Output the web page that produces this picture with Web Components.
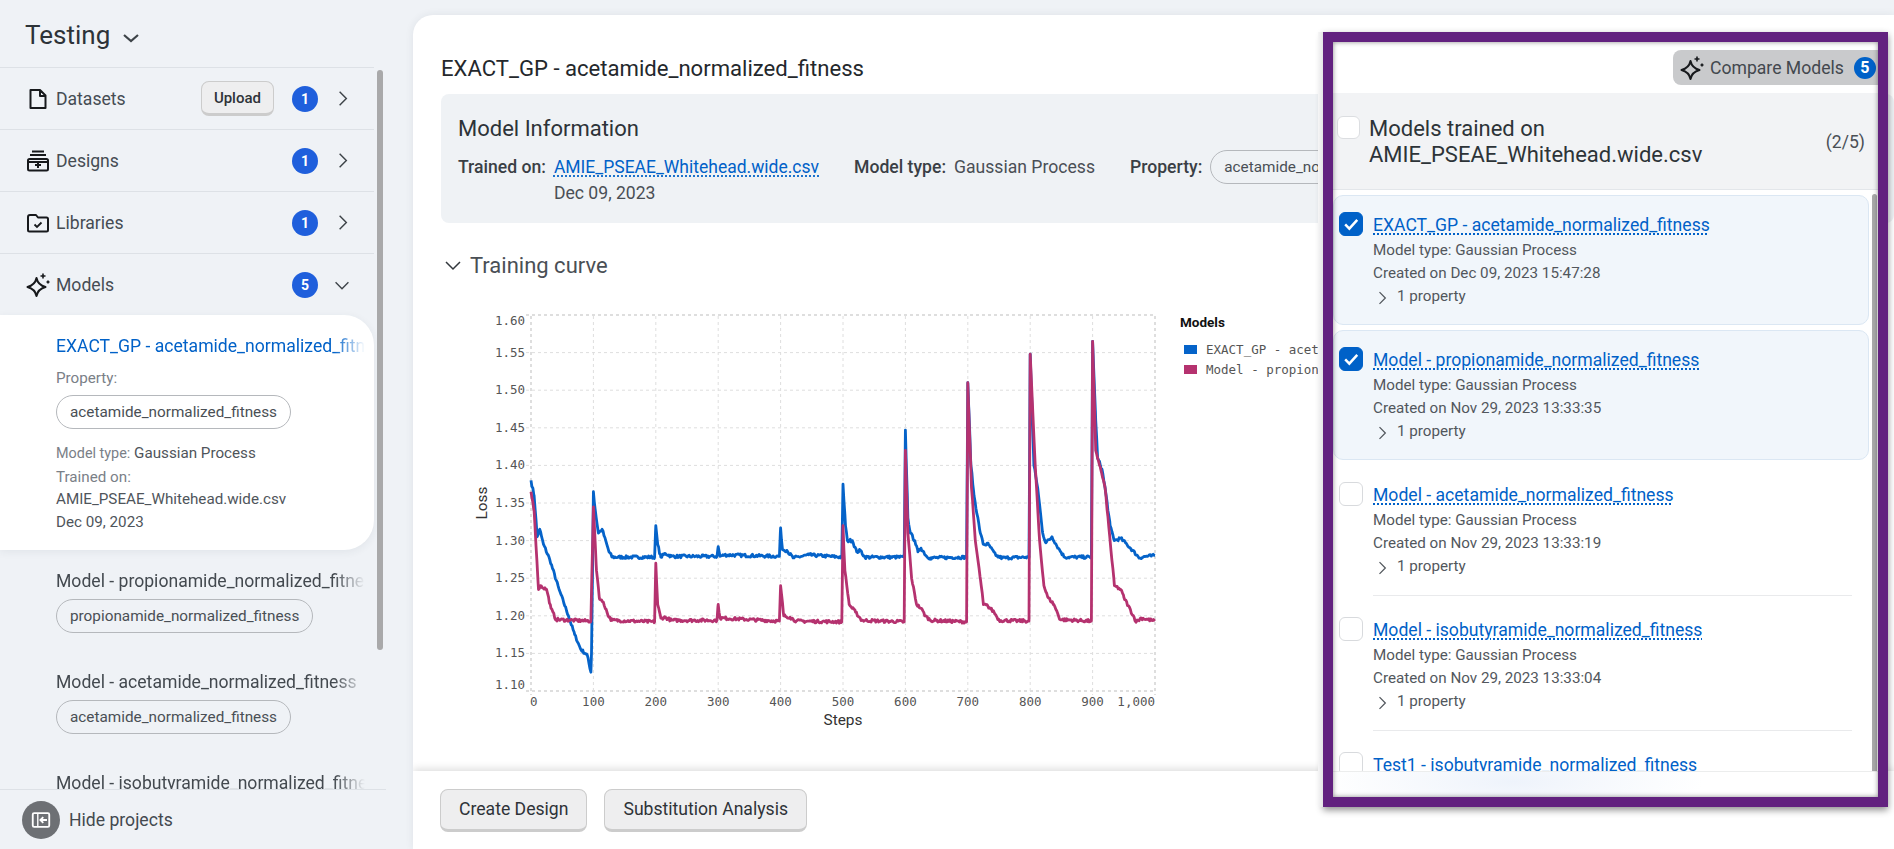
<!doctype html>
<html lang="en">
<head>
<meta charset="utf-8">
<title>Testing</title>
<style>
  html, body { margin: 0; height: 100%; overflow: hidden; background: #eff2f6; }
  body { font-family: Roboto, "Liberation Sans", sans-serif; }
</style>
</head>
<body>
<app-shell>
  <project-sidebar slot="side" title-text="Testing">
    <nav-row label="Datasets" icon="file" count="1" upload></nav-row>
    <nav-row label="Designs" icon="designs" count="1"></nav-row>
    <nav-row label="Libraries" icon="folder" count="1"></nav-row>
    <nav-row label="Models" icon="sparkle" count="5" open></nav-row>
    <model-card active name="EXACT_GP - acetamide_normalized_fitness" prop="acetamide_normalized_fitness"></model-card>
    <model-card name="Model - propionamide_normalized_fitness" prop="propionamide_normalized_fitness"></model-card>
    <model-card name="Model - acetamide_normalized_fitness" prop="acetamide_normalized_fitness"></model-card>
    <model-card name="Model - isobutyramide_normalized_fitness" prop="isobutyramide_normalized_fitness"></model-card>
  </project-sidebar>
  <model-view slot="main"></model-view>
</app-shell>

<script>
const ICONS = {
  file: '<path d="M4.500 3h9.500l5.500 5.500V21h-15z M14 3v6h5.500" fill="none" stroke="currentColor" stroke-width="2" stroke-linejoin="round"/>',
  designs: '<path d="M6 2.500h12 M4 6h16" stroke="currentColor" stroke-width="2" fill="none"/><rect x="2" y="10" width="20" height="11.500" rx="1.500" fill="none" stroke="currentColor" stroke-width="2"/><path d="M2 13h20 M12 13v6 M9 16h6" stroke="currentColor" stroke-width="2" fill="none"/>',
  folder: '<path d="M2 6a2 2 0 0 1 2-2h6l2 2.500h8.500a1.500 1.500 0 0 1 1.500 1.500v11a1.500 1.500 0 0 1-1.500 1.500H3.500A1.500 1.500 0 0 1 2 19z" fill="none" stroke="currentColor" stroke-width="2" stroke-linejoin="round"/><path d="M8.500 13.500l2.500 2.500 4.500-4.500" fill="none" stroke="currentColor" stroke-width="1.800"/>',
  sparkle: '<path d="M10.500 5c1 5 3.500 7.500 9 9-5.500 1.500-8 4-9 9-1-5-3.500-7.500-9-9 5.500-1.500 8-4 9-9z" fill="none" stroke="currentColor" stroke-width="2" stroke-linejoin="round"/><path d="M17 .5v5 M14.500 3h5 M22 7.500v3 M20.500 9h3" stroke="currentColor" stroke-width="1.600" fill="none"/>',
  right: '<path d="M9 5l7 7-7 7" fill="none" stroke="currentColor" stroke-width="1.500"/>',
  down: '<path d="M5 9l7 7 7-7" fill="none" stroke="currentColor" stroke-width="1.500"/>',
  downb: '<path d="M5 10l7 6 7-6" fill="none" stroke="currentColor" stroke-width="2.200"/>',
  hide: '<rect x="3" y="4.500" width="18" height="15" rx="1.500" fill="none" stroke="currentColor" stroke-width="2"/><path d="M8.500 5v14" stroke="currentColor" stroke-width="1.500"/><path d="M18.500 12h-7 M14.500 8.800L11.300 12l3.200 3.200" fill="none" stroke="currentColor" stroke-width="2"/>',
  check: '<path d="M5 12.500l5 5L19.500 7" fill="none" stroke="currentColor" stroke-width="3"/>'
}

class iconGlyph extends HTMLElement {
  connectedCallback(){
    const size = this.getAttribute('size') || 24
    this.attachShadow({mode: 'open'}).innerHTML = `
      <style>
        :host{ display: inline-flex; width: ${size}px; height: ${size}px; flex: none; }
        svg{ width: 100%; height: 100%; display: block; overflow: visible; }
      </style>
      <svg viewBox="0 0 24 24">${ICONS[this.getAttribute('name')]}</svg>
    `
  }
}
customElements.define('icon-glyph', iconGlyph)

class countBadge extends HTMLElement {
  connectedCallback(){
    const size = this.getAttribute('size') || 26
    this.attachShadow({mode: 'open'}).innerHTML = `
      <style>
        :host{
          display: inline-flex;
          flex: none;
          width: ${size}px;
          height: ${size}px;
          border-radius: 50%;
          align-items: center;
          justify-content: center;
          background: var(--badge-bg, #1f5fdc);
          color: #fff;
          font: 700 var(--badge-size, 14px) Roboto, sans-serif;
        }
      </style>
      <slot></slot>
    `
  }
}
customElements.define('count-badge', countBadge)

class tagChip extends HTMLElement {
  connectedCallback(){
    this.attachShadow({mode: 'open'}).innerHTML = `
      <style>
        :host{
          display: inline-flex;
          align-items: center;
          height: 34px;
          box-sizing: border-box;
          padding: 0 13px;
          border: 1px solid #b5b8bc;
          border-radius: 17px;
          font: 400 15.300px Roboto, sans-serif;
          color: #4a4f55;
          white-space: nowrap;
        }
      </style>
      <slot></slot>
    `
  }
}
customElements.define('tag-chip', tagChip)

class uiButton extends HTMLElement {
  connectedCallback(){
    this.attachShadow({mode: 'open'}).innerHTML = `
      <style>
        :host{
          display: inline-flex;
          align-items: center;
          justify-content: center;
          box-sizing: border-box;
          height: var(--btn-h, 43px);
          padding: 0 var(--btn-pad, 18px);
          background: #eeeeef;
          border: 1px solid #cccccc;
          border-bottom-width: 3px;
          border-radius: 8px;
          color: #2e3338;
          font: var(--btn-font, 400 17.600px Roboto, sans-serif);
          white-space: nowrap;
        }
      </style>
      <slot></slot>
    `
  }
}
customElements.define('ui-button', uiButton)

class navRow extends HTMLElement {
  connectedCallback(){
    const open = this.hasAttribute('open')
    const upload = this.hasAttribute('upload')
    this.attachShadow({mode: 'open'}).innerHTML = `
      <style>
        :host{
          display: flex;
          align-items: center;
          height: 62px;
          box-sizing: border-box;
          width: 374px;
          border-top: 1px solid #dde1e6;
          padding-left: 26px;
          color: #454c53;
          font: 400 17.600px Roboto, sans-serif;
        }
        .ico{ color: #17191c; width: 30px; display: flex; }
        .lbl{ flex: 1; }
        ui-button{ --btn-h: 35px; --btn-pad: 12px; --btn-font: 500 15px Roboto, sans-serif; margin-right: 18px; }
        .chev{ width: 24px; margin: 0 20px 0 12px; color: #3d4348; display: flex; justify-content: center; }
      </style>
      <span class="ico"><icon-glyph name="${this.getAttribute('icon')}" size="24"></icon-glyph></span>
      <span class="lbl">${this.getAttribute('label')}</span>
      ${upload ? '<ui-button>Upload</ui-button>' : ''}
      <count-badge>${this.getAttribute('count')}</count-badge>
      <span class="chev"><icon-glyph name="${open ? 'down' : 'right'}" size="${open ? 22 : 23}"></icon-glyph></span>
    `
  }
}
customElements.define('nav-row', navRow)

class modelCard extends HTMLElement {
  connectedCallback(){
    const active = this.hasAttribute('active')
    const details = active ? `
      <div class="prop-label">Property:</div>
      <tag-chip>${this.getAttribute('prop')}</tag-chip>
      <div class="meta">
        <div><span class="dim small">Model type:</span> Gaussian Process</div>
        <div class="dim">Trained on:</div>
        <div>AMIE_PSEAE_Whitehead.wide.csv</div>
        <div>Dec 09, 2023</div>
      </div>
    ` : `<tag-chip>${this.getAttribute('prop')}</tag-chip>`
    this.attachShadow({mode: 'open'}).innerHTML = `
      <style>
        :host{
          display: block;
          width: 374px;
          box-sizing: border-box;
          padding: 19px 0 0 56px;
          height: ${active ? '235px' : '101px'};
          font: 400 15.200px Roboto, sans-serif;
          color: #4f555b;
        }
        :host([active]){
          background: #fff;
          border-radius: 0 30px 30px 0;
          box-shadow: 0 2px 8px rgba(40, 50, 70, .07);
        }
        .name{
          width: 309px;
          overflow: hidden;
          white-space: nowrap;
          font-size: 17.600px;
          line-height: 24px;
          color: #43494f;
          -webkit-mask-image: linear-gradient(to right, #000 90%, transparent 100%);
          mask-image: linear-gradient(to right, #000 90%, transparent 100%);
        }
        :host([active]) .name{ color: #0061c8; }
        .prop-label{ color: #7a8087; margin-top: 9px; line-height: 22px; }
        tag-chip{ margin-top: 6px; }
        .meta{ margin-top: 13px; line-height: 22.600px; }
        .dim{ color: #7a8087; }
        .small{ font-size: 14.400px; }
      </style>
      <div class="name">${this.getAttribute('name')}</div>
      ${details}
    `
  }
}
customElements.define('model-card', modelCard)

class projectSidebar extends HTMLElement {
  connectedCallback(){
    this.attachShadow({mode: 'open'}).innerHTML = `
      <style>
        :host{
          display: flex;
          flex-direction: column;
          height: 849px;
          position: relative;
          font-family: Roboto, sans-serif;
        }
        .head{
          height: 67px;
          flex: none;
          box-sizing: border-box;
          padding: 19px 0 0 25px;
          display: flex;
          align-items: flex-start;
          gap: 9px;
          font-size: 26px;
          line-height: 32px;
          color: #2d3338;
        }
        .head icon-glyph{ margin-top: 6px; color: #3d4348; }
        .scroll{ flex: 1; overflow: hidden; min-height: 0; }
        .foot{
          height: 60px;
          flex: none;
          width: 386px;
          box-sizing: border-box;
          border-top: 1px solid #dde1e6;
          display: flex;
          align-items: center;
          gap: 9px;
          padding-left: 22px;
          font-size: 17.600px;
          color: #43494f;
        }
        .round{
          width: 38px;
          height: 38px;
          border-radius: 50%;
          background: #6d7074;
          color: #fff;
          display: flex;
          align-items: center;
          justify-content: center;
        }
        .bar{
          position: absolute;
          left: 377px;
          top: 70px;
          width: 6px;
          height: 580px;
          border-radius: 3px;
          background: #a9a9aa;
        }
      </style>
      <div class="head">
        <span>${this.getAttribute('title-text')}</span>
        <icon-glyph name="downb" size="24"></icon-glyph>
      </div>
      <div class="scroll"><slot></slot></div>
      <div class="foot">
        <span class="round"><icon-glyph name="hide" size="22"></icon-glyph></span>
        <span>Hide projects</span>
      </div>
      <div class="bar"></div>
    `
  }
}
customElements.define('project-sidebar', projectSidebar)

const BLUE = [[0,1.38],[5,1.36],[10,1.305],[14,1.315],[20,1.295],[30,1.275],[45,1.235],[60,1.2],[70,1.175],[80,1.155],[90,1.148],[96,1.125],[97,1.15],[100,1.365],[103,1.34],[108,1.31],[114,1.315],[125,1.285],[130,1.278],[198,1.278],[200,1.32],[203,1.295],[208,1.278],[215,1.283],[225,1.279],[298,1.279],[300,1.292],[303,1.279],[310,1.281],[398,1.279],[400,1.317],[403,1.288],[410,1.287],[420,1.277],[445,1.281],[498,1.278],[500,1.375],[504,1.32],[507,1.3],[515,1.3],[522,1.285],[528,1.287],[535,1.278],[598,1.278],[600,1.447],[604,1.33],[608,1.31],[615,1.3],[620,1.285],[625,1.29],[635,1.278],[640,1.277],[698,1.278],[700,1.51],[705,1.4],[710,1.36],[720,1.31],[725,1.295],[733,1.295],[745,1.28],[755,1.277],[798,1.278],[800,1.548],[806,1.4],[812,1.37],[820,1.31],[825,1.297],[835,1.305],[845,1.29],[855,1.278],[898,1.278],[900,1.565],[905,1.46],[908,1.41],[915,1.395],[920,1.37],[928,1.32],[935,1.3],[945,1.303],[955,1.295],[975,1.277],[985,1.279],[1000,1.28]]
const PINK = [[0,1.365],[5,1.34],[12,1.235],[15,1.24],[25,1.235],[32,1.21],[40,1.195],[96,1.193],[100,1.345],[105,1.26],[110,1.222],[116,1.218],[125,1.198],[130,1.194],[198,1.192],[200,1.27],[203,1.215],[208,1.197],[215,1.198],[225,1.194],[298,1.194],[300,1.215],[303,1.197],[398,1.193],[400,1.24],[405,1.2],[415,1.198],[425,1.193],[498,1.192],[500,1.32],[503,1.26],[510,1.215],[520,1.205],[530,1.194],[598,1.192],[600,1.42],[604,1.31],[610,1.25],[618,1.215],[625,1.21],[632,1.2],[640,1.194],[698,1.192],[700,1.51],[706,1.37],[712,1.3],[720,1.25],[725,1.215],[732,1.213],[742,1.205],[750,1.194],[798,1.193],[800,1.548],[808,1.4],[815,1.3],[822,1.24],[828,1.225],[838,1.215],[848,1.195],[898,1.193],[900,1.565],[905,1.42],[913,1.395],[920,1.37],[928,1.3],[935,1.24],[945,1.235],[950,1.225],[970,1.192],[978,1.197],[1000,1.193]]

class trainingChart extends HTMLElement {
  connectedCallback(){
    const sx = s => 531 + s * 0.624
    const sy = v => 691 - (v - 1.1) * 752

    let seed = 7
    const rnd = () => {
      seed = (seed * 16807) % 2147483647
      return seed / 2147483647 - 0.5
    }
    const line = pts => {
      let d = ''
      for (let i = 0; i < pts.length - 1; i++) {
        const [a, av] = pts[i]
        const [b, bv] = pts[i + 1]
        for (let s = a; s < b; s += 1.5) {
          const v = av + (bv - av) * (s - a) / (b - a)
          const jitter = s === a ? 0 : rnd() * 0.004
          d += (d ? 'L' : 'M') + sx(s).toFixed(1) + ' ' + sy(v + jitter).toFixed(1)
        }
      }
      return d + 'L' + sx(1000) + ' ' + sy(pts[pts.length - 1][1]).toFixed(1)
    }

    let grid = ''
    let labels = ''
    for (let i = 0; i <= 10; i++) {
      const v = 1.1 + i * 0.05
      const y = sy(v)
      const edge = i === 0 || i === 10
      grid += `<line x1="526" x2="1155" y1="${y}" y2="${y}" stroke="${edge ? '#bdbdbd' : '#dedede'}" stroke-dasharray="3 3"/>`
      const ly = i === 0 ? y - 2 : i === 10 ? y + 10 : y + 4
      labels += `<text x="525" y="${ly}" text-anchor="end">${v.toFixed(2)}</text>`
    }
    for (let i = 0; i <= 10; i++) {
      const x = sx(i * 100)
      const edge = i === 0 || i === 10
      grid += `<line x1="${x}" x2="${x}" y1="316" y2="695" stroke="${edge ? '#bdbdbd' : '#dedede'}" stroke-dasharray="3 3"/>`
      const t = i === 10 ? '1,000' : String(i * 100)
      const a = i === 0 ? 'start' : i === 10 ? 'end' : 'middle'
      labels += `<text x="${i === 0 ? x - 1 : x}" y="706" text-anchor="${a}">${t}</text>`
    }

    this.attachShadow({mode: 'open'}).innerHTML = `
      <style>
        :host{ display: block; width: 1000px; height: 440px; }
        svg{ display: block; }
        .mono text{ font: 12.500px "DejaVu Sans Mono", "Liberation Mono", monospace; fill: #555; }
        .title{ font: 400 15.400px Roboto, sans-serif; fill: #333; }
        .legend-title{ font: 700 13.500px Roboto, sans-serif; fill: #111; }
      </style>
      <svg width="1000" height="440" viewBox="441 300 1000 440">
        ${grid}
        <g class="mono">${labels}</g>
        <path d="${line(BLUE)}" fill="none" stroke="#0563c9" stroke-width="2.800" stroke-linejoin="round"/>
        <path d="${line(PINK)}" fill="none" stroke="#b5326f" stroke-width="2.800" stroke-linejoin="round"/>
        <text class="title" x="843" y="725" text-anchor="middle">Steps</text>
        <text class="title" transform="translate(487 503) rotate(-90)" text-anchor="middle">Loss</text>
        <text class="legend-title" x="1180" y="327">Models</text>
        <rect x="1184" y="345" width="13" height="9" fill="#0563c9"/>
        <rect x="1184" y="365" width="13" height="9" fill="#b5326f"/>
        <g class="mono">
          <text x="1206" y="354">EXACT_GP - acetamide_normalized_fitness</text>
          <text x="1206" y="374">Model - propionamide_normalized_fitness</text>
        </g>
      </svg>
    `
  }
}
customElements.define('training-chart', trainingChart)

class infoCard extends HTMLElement {
  connectedCallback(){
    this.attachShadow({mode: 'open'}).innerHTML = `
      <style>
        :host{
          display: block;
          height: 129px;
          box-sizing: border-box;
          padding: 21px 17px 0;
          background: #eff2f5;
          border-radius: 8px;
          color: #4a4f55;
          font: 400 17.600px Roboto, sans-serif;
        }
        h3{ margin: 0 0 11px; font: 400 22px/28px Roboto, sans-serif; color: #2d3338; }
        .fields{ display: flex; gap: 35px; align-items: flex-start; white-space: nowrap; }
        .field{ display: flex; gap: 8px; line-height: 26px; }
        b{ font-weight: 500; color: #3a3f45; }
        a{
          font-size: 17.500px;
          color: #0061c8;
          text-decoration: underline dotted #0061c8;
          text-underline-offset: 3px;
        }
        tag-chip{ margin-top: -4px; }
      </style>
      <h3>Model Information</h3>
      <div class="fields">
        <div class="field">
          <b>Trained on:</b>
          <div><a>AMIE_PSEAE_Whitehead.wide.csv</a><br>Dec 09, 2023</div>
        </div>
        <div class="field"><b>Model type:</b><span>Gaussian Process</span></div>
        <div class="field"><b>Property:</b><tag-chip>acetamide_normalized_fitness</tag-chip></div>
      </div>
    `
  }
}
customElements.define('info-card', infoCard)

class compareItem extends HTMLElement {
  connectedCallback(){
    const on = this.hasAttribute('checked')
    this.attachShadow({mode: 'open'}).innerHTML = `
      <style>
        :host{
          display: flex;
          box-sizing: border-box;
          height: 130px;
          flex: none;
          width: 536px;
          padding: 16px 16px 0 5px;
          border-radius: 10px;
          border: 1px solid transparent;
          font: 400 15.200px Roboto, sans-serif;
          color: #52575d;
        }
        :host([checked]){ background: #f1f6fb; border-color: #dbe7f3; }
        .box{
          width: 24px;
          height: 24px;
          box-sizing: border-box;
          flex: none;
          border-radius: 6px;
          border: 1px solid #d8dadd;
          background: #fff;
          margin-right: 10px;
          display: flex;
          align-items: center;
          justify-content: center;
          color: #fff;
        }
        .box.on{ background: #0061c8; border-color: #0061c8; }
        .col{ flex: 1; height: 114px; box-sizing: border-box; }
        :host([divider]) .col{ border-bottom: 1px solid #e9eaec; }
        .title{
          display: block;
          font-size: 17.600px;
          line-height: 26px;
          margin-bottom: 1px;
          color: #0061c8;
          text-decoration: underline dotted #0061c8;
          text-underline-offset: 3px;
          white-space: nowrap;
        }
        .line{ line-height: 23px; }
        .prop{ display: flex; align-items: center; gap: 5px; margin-left: -1px; }
        .prop icon-glyph{ margin-top: 3px; }
      </style>
      <div class="box ${on ? 'on' : ''}">${on ? '<icon-glyph name="check" size="20"></icon-glyph>' : ''}</div>
      <div class="col">
        <a class="title">${this.getAttribute('name')}</a>
        <div class="line">Model type: Gaussian Process</div>
        <div class="line">Created on ${this.getAttribute('created')}</div>
        <div class="line prop"><icon-glyph name="right" size="20"></icon-glyph>1 property</div>
      </div>
    `
  }
}
customElements.define('compare-item', compareItem)

class comparePanel extends HTMLElement {
  connectedCallback(){
    this.attachShadow({mode: 'open'}).innerHTML = `
      <style>
        :host{
          position: absolute;
          left: 1323px;
          top: 32px;
          width: 565px;
          height: 775px;
          box-sizing: border-box;
          border: 10px solid #62217f;
          box-shadow: 0 3px 7px rgba(0, 0, 0, .45);
          background: #fff;
          display: flex;
          flex-direction: column;
          font-family: Roboto, sans-serif;
          z-index: 5;
        }
        :host::before{
          content: "";
          position: absolute;
          left: -15px;
          top: -10px;
          bottom: -10px;
          width: 5px;
          background: linear-gradient(to right, #f6f6f7, #e4e4e5);
        }
        :host::after{
          content: "";
          position: absolute;
          inset: 0;
          box-shadow: inset 0 0 5px rgba(0, 0, 0, .45);
          pointer-events: none;
        }
        .top{
          height: 51px;
          flex: none;
          display: flex;
          justify-content: flex-end;
          padding-top: 8px;
          box-sizing: border-box;
        }
        .compare{
          height: 35px;
          width: 205px;
          box-sizing: border-box;
          background: #c9cacc;
          border-radius: 8px 0 0 8px;
          display: flex;
          align-items: center;
          padding-left: 7px;
          gap: 6px;
          color: #43484e;
          font-size: 17.600px;
          white-space: nowrap;
        }
        .compare icon-glyph{ color: #17191c; }
        .compare count-badge{ --badge-bg: #0061c8; --badge-size: 16px; margin-left: 4px; }
        .head{
          height: 97px;
          flex: none;
          box-sizing: border-box;
          background: #f2f3f5;
          border-bottom: 1px solid #e3e6ea;
          display: flex;
          padding: 23px 13px 0 4px;
          font-size: 22px;
          line-height: 26px;
          color: #2d3338;
        }
        .head .box{
          width: 23px;
          height: 23px;
          box-sizing: border-box;
          border: 1px solid #dcdee1;
          border-radius: 6px;
          background: #fff;
          flex: none;
          margin-right: 9px;
        }
        .head .name{ flex: 1; }
        .head .count{ font-size: 17.600px; color: #4a4f55; margin-top: 13px; }
        .list{
          flex: 1;
          min-height: 0;
          overflow: hidden;
          position: relative;
          display: flex;
          flex-direction: column;
          gap: 5px;
          padding-top: 5px;
        }
        .bar{
          position: absolute;
          left: 539px;
          top: 4px;
          bottom: 0;
          width: 5px;
          background: #a9a9aa;
          border-radius: 3px 3px 0 0;
        }
        .foot{
          height: 26px;
          flex: none;
          background: radial-gradient(ellipse 190px 40px at 180px 10px, #eef3fb, #fff);
          border-top: 1px solid #eceded;
          box-sizing: border-box;
        }
      </style>
      <div class="top">
        <div class="compare">
          <icon-glyph name="sparkle" size="24"></icon-glyph>
          <span>Compare Models</span>
          <count-badge size="22">5</count-badge>
        </div>
      </div>
      <div class="head">
        <div class="box"></div>
        <div class="name">Models trained on<br>AMIE_PSEAE_Whitehead.wide.csv</div>
        <div class="count">(2/5)</div>
      </div>
      <div class="list">
        <compare-item checked name="EXACT_GP - acetamide_normalized_fitness" created="Dec 09, 2023 15:47:28"></compare-item>
        <compare-item checked name="Model - propionamide_normalized_fitness" created="Nov 29, 2023 13:33:35"></compare-item>
        <compare-item divider name="Model - acetamide_normalized_fitness" created="Nov 29, 2023 13:33:19"></compare-item>
        <compare-item divider name="Model - isobutyramide_normalized_fitness" created="Nov 29, 2023 13:33:04"></compare-item>
        <compare-item name="Test1 - isobutyramide_normalized_fitness" created="Nov 29, 2023 13:32:50"></compare-item>
        <div class="bar"></div>
      </div>
      <div class="foot"></div>
    `
  }
}
customElements.define('compare-panel', comparePanel)

class modelView extends HTMLElement {
  connectedCallback(){
    this.attachShadow({mode: 'open'}).innerHTML = `
      <style>
        :host{
          display: flex;
          flex-direction: column;
          height: 834px;
          margin-top: 15px;
          background: #fff;
          border-radius: 20px 0 0 0;
          box-shadow: 0 0 8px rgba(40, 50, 70, .08);
          font-family: Roboto, sans-serif;
          overflow: hidden;
        }
        .body{ flex: 1; min-height: 0; padding: 0 0 0 28px; overflow: hidden; }
        h1{
          margin: 0;
          height: 79px;
          box-sizing: border-box;
          padding-top: 39px;
          font: 400 22.100px/28px Roboto, sans-serif;
          color: #24282c;
        }
        .curve{
          display: flex;
          align-items: center;
          gap: 5px;
          height: 28px;
          margin: 28px 0 21px;
          font-size: 22px;
          color: #4a4f55;
        }
        .curve icon-glyph{ color: #33383d; }
        .foot{
          flex: none;
          height: 78px;
          box-sizing: border-box;
          display: flex;
          align-items: center;
          gap: 17px;
          padding-left: 27px;
          box-shadow: 0 -2px 8px rgba(0, 0, 0, .14);
          position: relative;
          background: #fff;
        }
      </style>
      <div class="body">
        <h1>EXACT_GP - acetamide_normalized_fitness</h1>
        <info-card></info-card>
        <div class="curve"><icon-glyph name="down" size="24"></icon-glyph><span>Training curve</span></div>
        <training-chart></training-chart>
      </div>
      <div class="foot">
        <ui-button>Create Design</ui-button>
        <ui-button>Substitution Analysis</ui-button>
      </div>
    `
  }
}
customElements.define('model-view', modelView)

class appShell extends HTMLElement {
  constructor(){
    super()
    const template = document.createElement('template')
    template.innerHTML = `
      <style>
        :host{
          display: grid;
          grid-template-columns: 413px 1fr;
          height: 849px;
          width: 1894px;
          position: relative;
          overflow: hidden;
        }
      </style>
      <slot name="side"></slot>
      <slot name="main"></slot>
      <compare-panel></compare-panel>
    `
    this.attachShadow({mode: 'open'}).appendChild(template.content.cloneNode(true))
  }
}
customElements.define('app-shell', appShell)
</script>
</body>
</html>
